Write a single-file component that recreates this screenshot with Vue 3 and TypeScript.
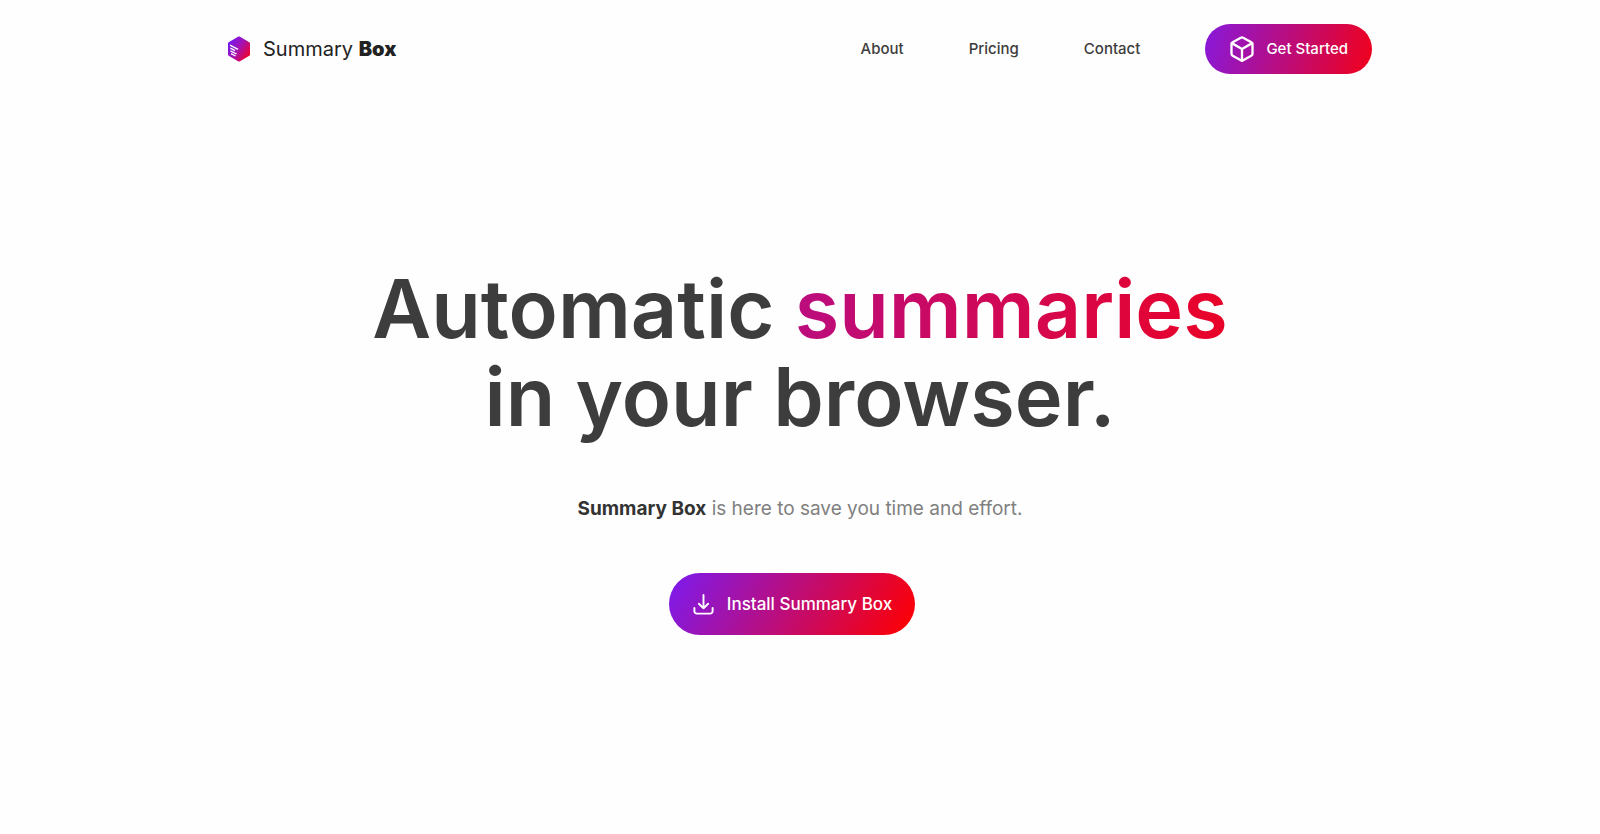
<script setup lang="ts">
interface NavLink {
  label: string
  href: string
}

const links: NavLink[] = [
  { label: 'About', href: '#about' },
  { label: 'Pricing', href: '#pricing' },
  { label: 'Contact', href: '#contact' },
]
</script>

<template>
  <div class="page">
    <header class="header">
      <a class="brand" href="#" aria-label="Summary Box home">
        <svg class="brand-mark" viewBox="0 0 22 26" aria-hidden="true">
          <defs>
            <linearGradient id="brand-gradient" x1="0" y1="0.1" x2="1" y2="0.85">
              <stop offset="0" stop-color="#6a18ff" />
              <stop offset="0.5" stop-color="#a512b0" />
              <stop offset="1" stop-color="#fb0018" />
            </linearGradient>
          </defs>
          <path
            d="M10.400 .6a1.200 1.200 0 0 1 1.200 0l9.700 5.600a1.400 1.400 0 0 1 .7 1.200v11.200a1.400 1.400 0 0 1-.7 1.200l-9.700 5.600a1.200 1.200 0 0 1-1.200 0L.7 19.800a1.400 1.400 0 0 1-.7-1.200V7.400a1.400 1.400 0 0 1 .7-1.200z"
            fill="url(#brand-gradient)"
          />
          <path
            d="M2 9.200l8 4.100M2.400 12.200l4.600 2.400M2.400 14.800l6.200 3.200M3 17.600l4.600 2.400"
            fill="none"
            stroke="#fff"
            stroke-width="1.300"
          />
        </svg>
        <span class="brand-name">Summary <strong>Box</strong></span>
      </a>
      <nav class="nav" aria-label="Main">
        <a v-for="link in links" :key="link.label" class="nav-link" :href="link.href">{{ link.label }}</a>
        <button class="button button-small" type="button">
          <svg class="icon-box" viewBox="0 0 24 24" aria-hidden="true">
            <path
              d="M21 16V8a2 2 0 0 0-1-1.730l-7-4a2 2 0 0 0-2 0l-7 4A2 2 0 0 0 3 8v8a2 2 0 0 0 1 1.730l7 4a2 2 0 0 0 2 0l7-4A2 2 0 0 0 21 16z"
            />
            <path d="M3.270 6.960L12 12.010l8.730-5.050M12 22.080V12" />
          </svg>
          Get Started
        </button>
      </nav>
    </header>

    <main class="hero">
      <h1 class="title">Automatic <span class="highlight">summaries</span><br />in your browser.</h1>
      <p class="lead"><strong>Summary Box</strong> is here to save you time and effort.</p>
      <button class="button button-large" type="button">
        <svg class="icon-download" viewBox="0 0 24 24" aria-hidden="true">
          <path d="M2.500 15.500v3.500a2.500 2.500 0 0 0 2.500 2.500h14a2.500 2.500 0 0 0 2.500-2.500v-3.500M12 2v14M7.200 11.200L12 16l4.800-4.800" />
        </svg>
        Install Summary Box
      </button>
    </main>
  </div>
</template>

<style>
body {
  margin: 0;
  background: #fefefe;
}
</style>

<style scoped>
.page {
  font-family: Inter, 'Liberation Sans', sans-serif;
  color: #3d3d3d;
}

.header {
  box-sizing: border-box;
  max-width: 1192px;
  margin: 0 auto;
  padding: 24px;
  display: flex;
  align-items: center;
  justify-content: space-between;
}

.brand {
  display: flex;
  align-items: center;
  gap: 13px;
  color: #222;
  text-decoration: none;
}

.brand-mark {
  width: 22px;
  height: 26px;
}

.brand-name {
  font-size: 20px;
  line-height: 24px;
}

.brand-name strong {
  font-weight: 900;
}

.nav {
  display: flex;
  align-items: center;
  gap: 65px;
}

.nav-link {
  color: #3d3d3d;
  font-size: 15px;
  font-weight: 500;
  line-height: 24px;
  text-decoration: none;
}

.button {
  display: flex;
  align-items: center;
  border: 0;
  border-radius: 32px;
  color: #fff;
  font-family: inherit;
  font-weight: 500;
  line-height: 24px;
  cursor: pointer;
}

.button svg {
  flex: none;
  fill: none;
  stroke: currentColor;
  stroke-linecap: round;
  stroke-linejoin: round;
  stroke-width: 2;
}

.button-small {
  gap: 10px;
  padding: 13px 24px 13px 23px;
  background: linear-gradient(105deg, #8719dc, #f10019);
  font-size: 15px;
}

.button-large {
  gap: 12px;
  margin-right: 16px;
  padding: 19px 23px;
  background: linear-gradient(120deg, #7b1bf0, #fc0006 96%);
  font-size: 17px;
}

.icon-box {
  width: 28px;
  height: 28px;
  margin: -2px 0;
}

.icon-download {
  width: 23px;
  height: 23px;
}

.hero {
  display: flex;
  flex-direction: column;
  align-items: center;
  padding: 167px 24px 48px;
  text-align: center;
}

.title {
  margin: 0;
  font-size: 81px;
  font-weight: 600;
  line-height: 88px;
}

.highlight {
  background: linear-gradient(100deg, #ba0d80, #ea0226);
  background-clip: text;
  -webkit-background-clip: text;
  color: transparent;
}

.lead {
  margin: 52px 0 48px;
  color: #808080;
  font-size: 19px;
  line-height: 32px;
}

.lead strong {
  color: #333;
  font-weight: 700;
}
</style>
